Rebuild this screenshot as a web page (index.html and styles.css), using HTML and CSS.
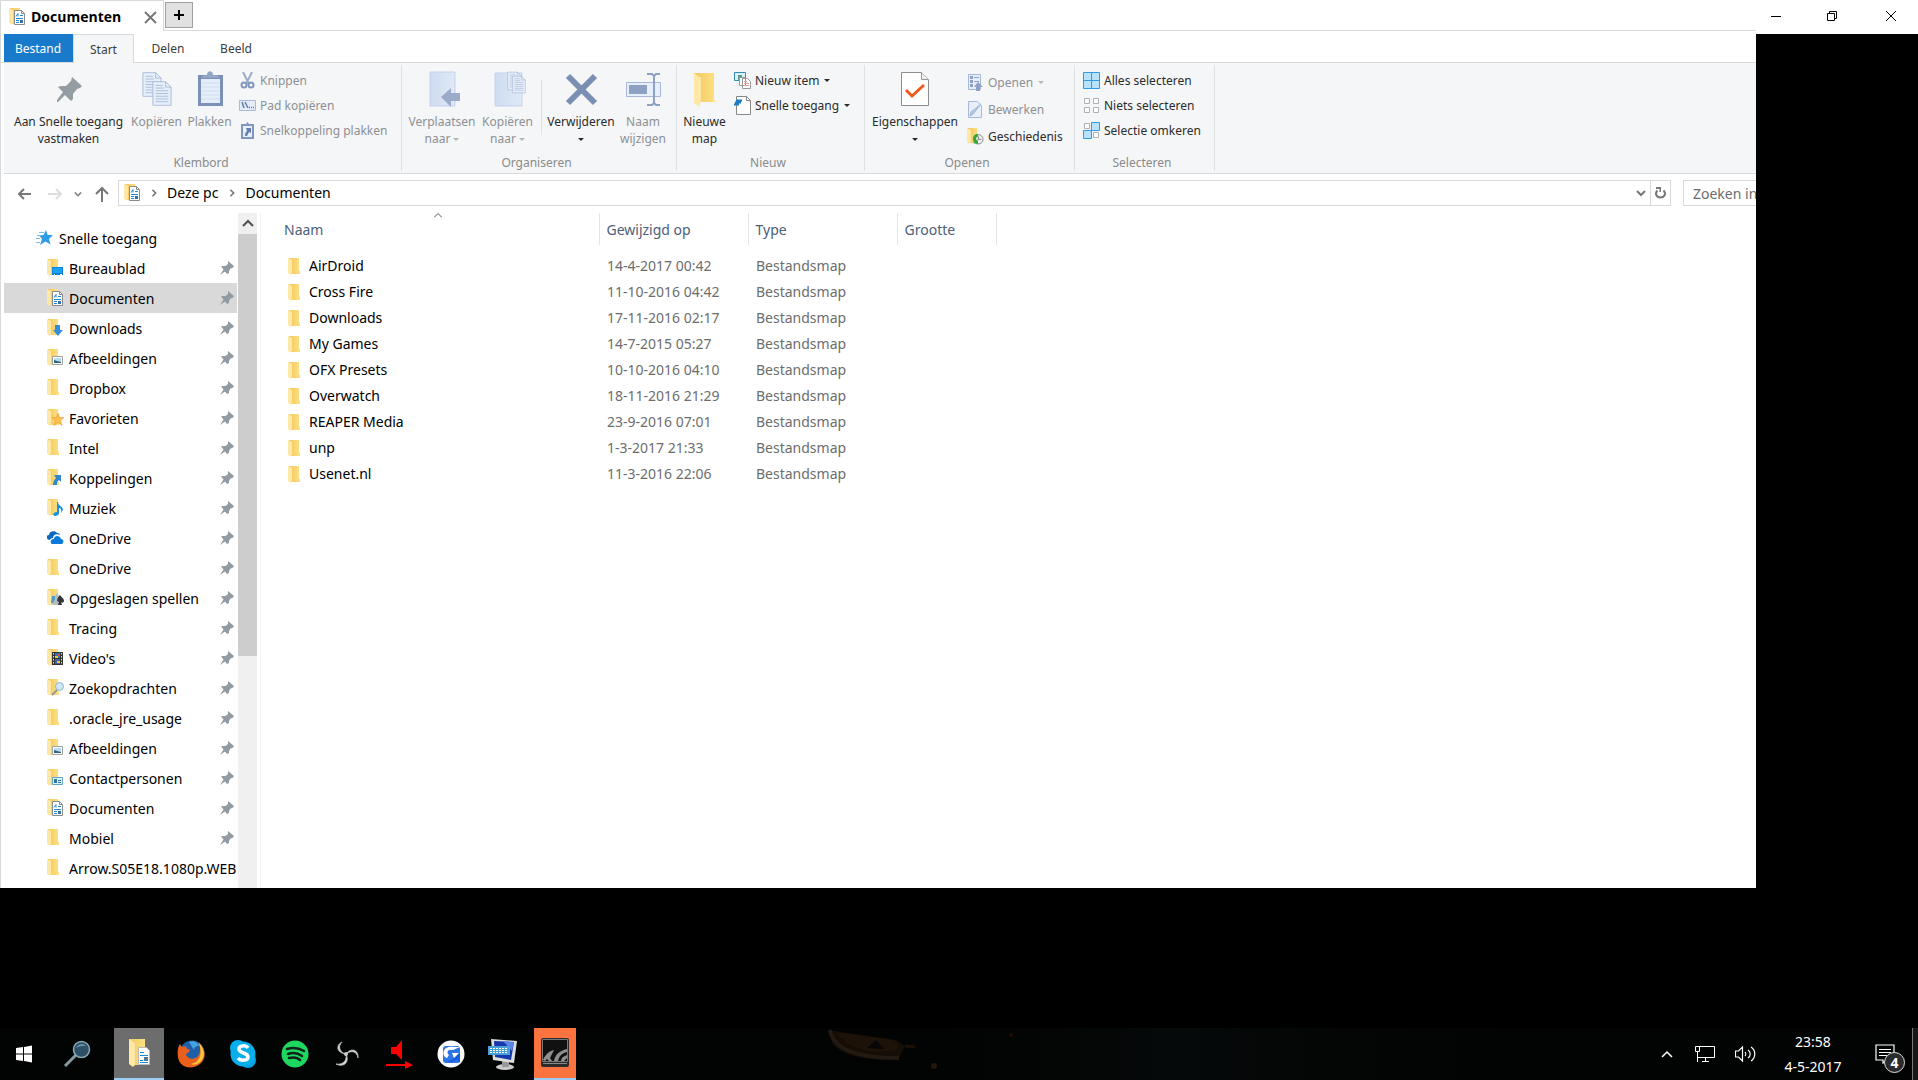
FILE: index.html
```html
<!DOCTYPE html>
<html lang="nl">
<head>
<meta charset="utf-8">
<title>Documenten</title>
<link rel="stylesheet" href="styles.css">
</head>
<body>
<svg class="defs" aria-hidden="true">
  <linearGradient id="gold"><stop offset="0" stop-color="#f0c95f"/><stop offset="1" stop-color="#ffe083"/></linearGradient>
  <linearGradient id="pale"><stop offset="0" stop-color="#cfdcf0"/><stop offset="1" stop-color="#dfe9f7"/></linearGradient>
  <symbol id="folder" viewBox="0 0 18 18"><path d="M1 0h10v12l1 1v3H2z" fill="url(#gold)"/><path d="M0 0l4 2v13l-1 1v1L0 15z" fill="#ffe8a6"/></symbol>
  <symbol id="doc" viewBox="0 0 18 18"><path d="M5.500 2.500h7l3 3v11h-10z" fill="#fff" stroke="#8b8b8b"/><path d="M12.500 2.500v3h3" fill="none" stroke="#8b8b8b"/><path d="M7 8.500l2-3v3M11 7.500h3M7 10.500h7M7 12.500h3M7 14.500h3" stroke="#1c8bdc" fill="none"/><path d="M11 12h3v3h-3z" fill="#3b6ea5"/></symbol>
  <symbol id="desk" viewBox="0 0 18 18"><path d="M5 8h11v8H5z" fill="#0a84dc"/><path d="M6 9h9v5H6z" fill="#18a2f4"/><path d="M7 15.500h1M13 15.500h2" stroke="#fff"/></symbol>
  <symbol id="down" viewBox="0 0 18 18"><path d="M8 6h5v5h3l-5 6-5-6h2z" fill="#358bdc"/></symbol>
  <symbol id="pic" viewBox="0 0 18 18"><path d="M5.500 7.500h10v8h-10z" fill="#fff" stroke="#a1a1a1"/><path d="M7 9h7v5H7z" fill="#b8dcf4"/><path d="M7 11l3 1 4 1v1H7z" fill="#2f6473"/></symbol>
  <symbol id="fav" viewBox="0 0 18 18"><path d="M11 4l1.500 4.500H17l-3.500 3 1.500 5-4-3-4 3 1.300-5L5 8.500h4.500z" fill="#ffbe4d" stroke="#e89a32" stroke-width=".6"/></symbol>
  <symbol id="link" viewBox="0 0 18 18"><path d="M7 6h7v7l-2-2c-2 1-2 3-2 5H6c0-3 1-5 3-7z" fill="#3187cf"/></symbol>
  <symbol id="music" viewBox="0 0 18 18"><path d="M10 3h1c0 4 5 4 5 8l-2 3c1-4-1-5-2-5v5c0 2-2 3-4 3-3-1-2-4 2-4z" fill="#1593e6"/></symbol>
  <symbol id="cloud" viewBox="0 0 18 18"><path d="M3 11c-5-1-4-5-1-5 0-4 6-5 8-2 2 0 3 1 3 2-4-2-7 0-7 3-2 0-3 1-3 2z" fill="#0a67bf"/><path d="M4 14c-1-3 1-4 3-4 0-4 6-4 7 0 3 0 3 4 1 5H6c-1 0-2 0-2-1z" fill="#0a7bdc"/></symbol>
  <symbol id="games" viewBox="0 0 18 18"><path d="M5 7h3v7H4z" fill="#509cc8"/><path d="M8 7l2-3 2 3-1 2 2 7H5l3-6z" fill="#b3bec3"/><path d="M13 6c1 2 4 3 4 6 0 2-3 2-3 1l1 3h-4l1-3c-2 0-3-3 1-7z" fill="#34363b"/></symbol>
  <symbol id="video" viewBox="0 0 18 18"><path d="M5 3h11v13H5z" fill="#333"/><path d="M8 4h5v5H8z" fill="#2c72c4"/><path d="M8 10h5v5H8z" fill="#3c62a8"/><path d="M8 7h3v2H8zM10 12h3v2h-3z" fill="#f5c62c"/><path d="M11 5h2v2h-2z" fill="#d9512e"/><path d="M6.500 4v12M14.500 4v12" stroke="#ddd" stroke-dasharray="1.500"/></symbol>
  <symbol id="lens" viewBox="0 0 18 18"><path d="M10 11l-5 5" stroke="#9a9a9a" stroke-width="2"/><circle cx="12.500" cy="7.500" r="4" fill="#cbe9fb" stroke="#94b4c6"/></symbol>
  <symbol id="contact" viewBox="0 0 18 18"><path d="M5.500 8.500h10v7h-10z" fill="#d9f0fb" stroke="#66a5c6"/><path d="M7 10h3v4H7z" fill="#317695"/><path d="M11 11.500h3M11 13.500h3" stroke="#317695"/></symbol>
  <symbol id="star" viewBox="0 0 18 18"><path d="M10 1l1.600 5L17 6l-4 4 1.500 5.500-5-3L4 16l2-6-3-3.500 4.500-.5z" fill="#2e9ce8"/><path d="M3 3.500h5M1 6.500h3M0 9.500h4M0 13.500h4" stroke="#7bbce8"/></symbol>
  <symbol id="pin" viewBox="0 0 14 14"><path d="M8 0l6 5-1.500 2-2 .5L9 10v2L7 13 5 10.500 0 14l3.500-5.500L1 5.500l1.500-.5h3L8 3z" fill="#919ba1"/></symbol>
  <symbol id="chev" viewBox="0 0 10 10"><path d="M1 3l4 4 4-4" fill="none" stroke="currentColor" stroke-width="2"/></symbol>
  <symbol id="tri" viewBox="0 0 6 4"><path d="M0 0h6L3 3z" fill="currentColor"/></symbol>
  <symbol id="page" viewBox="0 0 22 28"><path d="M1 1h14l6 6v20H1z" fill="#e6effa" stroke="#a9b9d7"/><path d="M15 1v6h6M4 5h8M4 8h9M4 11h14M4 14h14M4 17h14M4 20h14M4 23h14" fill="none" stroke="#a9b9d7"/></symbol>
</svg>

<main class="desktop">
  <section class="explorer">
    <div class="titlebar">
      <div class="wintab">
        <svg width="18" height="18"><use href="#folder"/><use href="#doc"/></svg>
        <strong>Documenten</strong>
        <button class="close" aria-label="Tabblad sluiten"><svg width="13" height="13" viewBox="0 0 13 13"><path d="M1 1l11 11M12 1L1 12" stroke="#777" stroke-width="2"/></svg></button>
      </div>
      <div class="title-rest"><button class="newtab" aria-label="Nieuw tabblad"><svg width="10" height="10" viewBox="0 0 10 10"><path d="M5 0v10M0 5h10" stroke="#000" stroke-width="2"/></svg></button></div>
    </div>
    <nav class="tabs">
      <button class="file">Bestand</button><button class="active">Start</button><button>Delen</button><button>Beeld</button>
    </nav>

    <div class="ribbon">
      <section class="group clip">
        <div class="tools">
          <button class="big w-pin"><svg width="36" height="36" viewBox="0 0 36 36"><path d="M21 6l10 9-2 2-3 1-4 5v5l-2 2-6-6-7 7H6v-2l6-8-5-5 3-1h5l5-5z" fill="#939da2"/></svg><span>Aan Snelle toegang<br>vastmaken</span></button>
          <button class="big w-m" disabled><svg width="36" height="36" viewBox="0 0 36 36"><use href="#page" x="3" y="0" width="20" height="27"/><use href="#page" x="13" y="9" width="20" height="27"/></svg><span>Kopiëren</span></button>
          <button class="big w-s" disabled><svg width="36" height="36" viewBox="0 0 36 36"><path d="M6 4h25v31H6z" fill="#7b90b7"/><path d="M9 8h19v24H9z" fill="#e4eefa"/><path d="M9 12h19M9 16h19M9 20h19M9 24h19M9 28h19" stroke="#cfdcf0"/><path d="M9 7l3-3h3c0-5 6-5 6 0h4l3 3z" fill="#94a5c6"/></svg><span>Plakken</span></button>
          <div class="list">
            <button disabled><svg width="17" height="17" viewBox="0 0 17 17"><path d="M4 0l6 12M13 0L7 12" stroke="#9aacca" stroke-width="2"/><circle cx="5" cy="13" r="2.500" fill="none" stroke="#8297bd" stroke-width="2"/><circle cx="12" cy="13" r="2.500" fill="none" stroke="#8297bd" stroke-width="2"/></svg>Knippen</button>
            <button disabled><svg width="17" height="17" viewBox="0 0 17 17"><path d="M.5 3.500h16v10H.5z" fill="#e3ecf8" stroke="#a9b9d7"/><path d="M3 5l2 6M6 5l3 6M10 10.500h1M12 10.500h1M14 10.500h1" stroke="#667fae" stroke-width="1.500"/></svg>Pad kopiëren</button>
            <button disabled><svg width="17" height="17" viewBox="0 0 17 17"><path d="M2 2h13v15H2z" fill="#8297bd"/><path d="M4 4h9v11H4z" fill="#e6effa"/><path d="M5 3l2-1 1.500-2L10 2l2 1v1H5z" fill="#8297bd"/><path d="M7 6h5v5l-2-1-2 4H6c0-3 1-4 2-5z" fill="#667fae"/></svg>Snelkoppeling plakken</button>
          </div>
        </div>
        <h2>Klembord</h2>
      </section>
      <section class="group org">
        <div class="tools">
          <button class="big w-l" disabled><svg width="36" height="36" viewBox="0 0 36 36"><path d="M6 1h25v34H6z" fill="url(#pale)" stroke="#c3d2ea"/><path d="M17 26l10-9v5h10v8H27v6z" fill="#9aabca"/></svg><span>Verplaatsen<br>naar <svg class="tri"><use href="#tri"/></svg></span></button>
          <button class="big w-m" disabled><svg width="36" height="36" viewBox="0 0 36 36"><path d="M5 2h27v33H5z" fill="url(#pale)" stroke="#c3d2ea"/><use href="#page" x="17" y="0" width="15" height="20"/><use href="#page" x="22" y="4" width="14" height="19"/></svg><span>Kopiëren<br>naar <svg class="tri"><use href="#tri"/></svg></span></button>
          <i class="sep"></i>
          <button class="big w-v"><svg width="36" height="36" viewBox="0 0 36 36"><path d="M5 5l27 27M32 5L5 32" stroke="#7b8fb3" stroke-width="6"/></svg><span>Verwijderen<br><svg class="tri"><use href="#tri"/></svg></span></button>
          <button class="big w-n" disabled><svg width="36" height="36" viewBox="0 0 36 36"><path d="M1.500 11.500h34v14h-34z" fill="#e6effa" stroke="#a5b8da"/><path d="M4 14h18v9H4z" fill="#8ea0c3"/><path d="M22 3h5l2 2 2-2h4M29 5v28M22 34h5l2-2 2 2h4" fill="none" stroke="#8ea0c3" stroke-width="2"/></svg><span>Naam<br>wijzigen</span></button>
        </div>
        <h2>Organiseren</h2>
      </section>
      <section class="group new">
        <div class="tools">
          <button class="big w-s"><svg width="36" height="36" viewBox="0 0 36 36"><path d="M7 2h20v27l2 2v0H10z" fill="url(#gold)"/><path d="M7 2l7 5v24l-1 2v3l-6-4z" fill="#ffe8a6"/></svg><span>Nieuwe<br>map</span></button>
          <div class="list">
            <button><svg width="17" height="17" viewBox="0 0 17 17"><path d="M.5.500h11v8H.5z" fill="#d9f0fb" stroke="#338db7"/><path d="M4 3h4v5H4z" fill="#549c88"/><path d="M5.500 5.500h6v8h-6zM8.500 6.500h5l3 3v7h-8z" fill="#fff" stroke="#999"/><path d="M10 9.500h3M10 11.500h5M10 13.500h5" stroke="#d8a4a0"/></svg>Nieuw item <svg class="tri"><use href="#tri"/></svg></button>
            <button><svg width="17" height="19" viewBox="0 0 17 19"><path d="M2.500.500h10l4 4v14h-14z" fill="#fff" stroke="#888"/><path d="M12.500.500v4h4" fill="none" stroke="#888"/><path d="M2 4.500h6M1 6.500h6M0 8.500h5" stroke="#1e7cc2" stroke-width="2"/></svg>Snelle toegang <svg class="tri"><use href="#tri"/></svg></button>
          </div>
        </div>
        <h2>Nieuw</h2>
      </section>
      <section class="group open">
        <div class="tools">
          <button class="big w-e"><svg width="36" height="36" viewBox="0 0 36 36"><path d="M4.500 1.500h20l7 7v26h-27z" fill="#fff" stroke="#8d8d8d"/><path d="M24.500 1.500v7h7" fill="#eee" stroke="#999"/><path d="M9 19l6 6 12-11" fill="none" stroke="#f05a1a" stroke-width="3"/></svg><span>Eigenschappen<br><svg class="tri"><use href="#tri"/></svg></span></button>
          <div class="list loose">
            <button disabled><svg width="17" height="17" viewBox="0 0 17 17"><path d="M1.500.500h12v15h-12z" fill="#e6effa" stroke="#a5b8da"/><path d="M3 2h3v3H3zM3 6h3v3H3zM3 10h3v3H3zM7 3h5v1H7zM7 7h5v1H7z" fill="#8ea0c3"/><path d="M11 8l5 5h-3v4H9v-4H7z" fill="#8ea0c3"/></svg>Openen <svg class="tri"><use href="#tri"/></svg></button>
            <button disabled><svg width="17" height="17" viewBox="0 0 17 17"><path d="M1.500.500h9l4 4v12h-13z" fill="#e6effa" stroke="#a5b8da"/><path d="M14 3L6 13l-3 2 1-4z" fill="#b9cae5" stroke="#a0b3d3"/></svg>Bewerken</button>
            <button><svg width="17" height="17" viewBox="0 0 18 18"><use href="#folder" width="18" height="18"/><circle cx="12" cy="12" r="5" fill="#eee" stroke="#888"/><path d="M12 9v3h3" fill="none" stroke="#777"/><path d="M11 6c-5 1-6 6-3 9l-2 1 6 1-1-5-1 1c-1-2 0-4 2-4z" fill="#33a63a"/></svg>Geschiedenis</button>
          </div>
        </div>
        <h2>Openen</h2>
      </section>
      <section class="group select">
        <div class="tools">
          <div class="list">
            <button><svg width="17" height="17" viewBox="0 0 17 17"><path d="M.5.500h16v16H.5zM8.500 1v15M1 8.500h15" fill="#b9e2ff" stroke="#2f9be8"/></svg>Alles selecteren</button>
            <button><svg width="17" height="17" viewBox="0 0 17 17"><path d="M1.500 1.500h5v5h-5zM10.500 1.500h5v5h-5zM1.500 10.500h5v5h-5zM10.500 10.500h5v5h-5z" fill="#fff" stroke="#b0b0b0"/></svg>Niets selecteren</button>
            <button><svg width="17" height="17" viewBox="0 0 17 17"><path d="M1.500 1.500h5v5h-5zM10.500 10.500h5v5h-5z" fill="#fff" stroke="#b0b0b0"/><path d="M8.500.500h8v8h-8zM.5 8.500h8v8h-8z" fill="#b9e2ff" stroke="#2f9be8"/></svg>Selectie omkeren</button>
          </div>
        </div>
        <h2>Selecteren</h2>
      </section>
    </div>

    <div class="address">
      <div class="history">
        <button aria-label="Vorige"><svg width="14" height="12" viewBox="0 0 14 12"><path d="M13 6H2M6 1L1 6l5 5" fill="none" stroke="#777" stroke-width="2"/></svg></button>
        <button aria-label="Volgende"><svg width="14" height="12" viewBox="0 0 14 12"><path d="M0 6h12M8 1l5 5-5 5" fill="none" stroke="#dedede" stroke-width="2"/></svg></button>
        <button aria-label="Recente locaties" class="small"><svg width="8" height="8" color="#888"><use href="#chev"/></svg></button>
        <button aria-label="Omhoog"><svg width="14" height="16" viewBox="0 0 14 16"><path d="M7 16V2M1 8l6-6 6 6" fill="none" stroke="#777" stroke-width="2"/></svg></button>
      </div>
      <div class="path">
        <svg width="18" height="18"><use href="#folder"/><use href="#doc"/></svg>
        <svg class="crumb" width="8" height="8"><use href="#chev"/></svg>
        <a href="#">Deze pc</a>
        <svg class="crumb" width="8" height="8"><use href="#chev"/></svg>
        <a href="#">Documenten</a>
        <button class="drop" aria-label="Vorige locaties"><svg width="10" height="10"><use href="#chev"/></svg></button>
      </div>
      <button class="refresh" aria-label="Vernieuwen"><svg width="11" height="12" viewBox="0 0 11 12"><path d="M2.500 3.500c-3 3-1 7 3 7s6-4 3-7" fill="none" stroke="#777" stroke-width="2"/><path d="M1 0h5v5H4.500V2H1z" fill="#777"/></svg></button>
      <input class="search" type="text" aria-label="Zoeken" placeholder="Zoeken in Documenten">
    </div>

    <div class="body">
      <aside class="side">
        <a class="root" href="#"><svg width="18" height="18"><use href="#star"/></svg><span>Snelle toegang</span></a>
        <a href="#"><svg><use href="#folder"/><use href="#desk"/></svg><span>Bureaublad</span><svg class="pin"><use href="#pin"/></svg></a>
        <a class="current" href="#"><svg><use href="#folder"/><use href="#doc"/></svg><span>Documenten</span><svg class="pin"><use href="#pin"/></svg></a>
        <a href="#"><svg><use href="#folder"/><use href="#down"/></svg><span>Downloads</span><svg class="pin"><use href="#pin"/></svg></a>
        <a href="#"><svg><use href="#folder"/><use href="#pic"/></svg><span>Afbeeldingen</span><svg class="pin"><use href="#pin"/></svg></a>
        <a href="#"><svg><use href="#folder"/></svg><span>Dropbox</span><svg class="pin"><use href="#pin"/></svg></a>
        <a href="#"><svg><use href="#folder"/><use href="#fav"/></svg><span>Favorieten</span><svg class="pin"><use href="#pin"/></svg></a>
        <a href="#"><svg><use href="#folder"/></svg><span>Intel</span><svg class="pin"><use href="#pin"/></svg></a>
        <a href="#"><svg><use href="#folder"/><use href="#link"/></svg><span>Koppelingen</span><svg class="pin"><use href="#pin"/></svg></a>
        <a href="#"><svg><use href="#folder"/><use href="#music"/></svg><span>Muziek</span><svg class="pin"><use href="#pin"/></svg></a>
        <a href="#"><svg><use href="#cloud"/></svg><span>OneDrive</span><svg class="pin"><use href="#pin"/></svg></a>
        <a href="#"><svg><use href="#folder"/></svg><span>OneDrive</span><svg class="pin"><use href="#pin"/></svg></a>
        <a href="#"><svg><use href="#folder"/><use href="#games"/></svg><span>Opgeslagen spellen</span><svg class="pin"><use href="#pin"/></svg></a>
        <a href="#"><svg><use href="#folder"/></svg><span>Tracing</span><svg class="pin"><use href="#pin"/></svg></a>
        <a href="#"><svg><use href="#folder"/><use href="#video"/></svg><span>Video's</span><svg class="pin"><use href="#pin"/></svg></a>
        <a href="#"><svg><use href="#folder"/><use href="#lens"/></svg><span>Zoekopdrachten</span><svg class="pin"><use href="#pin"/></svg></a>
        <a href="#"><svg><use href="#folder"/></svg><span>.oracle_jre_usage</span><svg class="pin"><use href="#pin"/></svg></a>
        <a href="#"><svg><use href="#folder"/><use href="#pic"/></svg><span>Afbeeldingen</span><svg class="pin"><use href="#pin"/></svg></a>
        <a href="#"><svg><use href="#folder"/><use href="#contact"/></svg><span>Contactpersonen</span><svg class="pin"><use href="#pin"/></svg></a>
        <a href="#"><svg><use href="#folder"/><use href="#doc"/></svg><span>Documenten</span><svg class="pin"><use href="#pin"/></svg></a>
        <a href="#"><svg><use href="#folder"/></svg><span>Mobiel</span><svg class="pin"><use href="#pin"/></svg></a>
        <a href="#"><svg><use href="#folder"/></svg><span>Arrow.S05E18.1080p.WEB</span></a>
      </aside>
      <div class="scroll"><button aria-label="Omhoog schuiven"><svg width="12" height="12" viewBox="0 0 12 12"><path d="M1 8l5-5 5 5" fill="none" stroke="#505050" stroke-width="2"/></svg></button><div class="thumb"></div></div>
      <div class="files">
        <table>
          <colgroup><col class="c-name"><col class="c-date"><col class="c-date"><col class="c-size"></colgroup>
          <thead><tr><th>Naam<svg class="sort" width="8" height="5" viewBox="0 0 8 5"><path d="M0 4.500l4-4 4 4" fill="none" stroke="#555"/></svg></th><th>Gewijzigd op</th><th>Type</th><th>Grootte</th></tr></thead>
          <tbody>
            <tr><td><svg><use href="#folder"/></svg>AirDroid</td><td>14-4-2017 00:42</td><td>Bestandsmap</td><td></td></tr>
            <tr><td><svg><use href="#folder"/></svg>Cross Fire</td><td>11-10-2016 04:42</td><td>Bestandsmap</td><td></td></tr>
            <tr><td><svg><use href="#folder"/></svg>Downloads</td><td>17-11-2016 02:17</td><td>Bestandsmap</td><td></td></tr>
            <tr><td><svg><use href="#folder"/></svg>My Games</td><td>14-7-2015 05:27</td><td>Bestandsmap</td><td></td></tr>
            <tr><td><svg><use href="#folder"/></svg>OFX Presets</td><td>10-10-2016 04:10</td><td>Bestandsmap</td><td></td></tr>
            <tr><td><svg><use href="#folder"/></svg>Overwatch</td><td>18-11-2016 21:29</td><td>Bestandsmap</td><td></td></tr>
            <tr><td><svg><use href="#folder"/></svg>REAPER Media</td><td>23-9-2016 07:01</td><td>Bestandsmap</td><td></td></tr>
            <tr><td><svg><use href="#folder"/></svg>unp</td><td>1-3-2017 21:33</td><td>Bestandsmap</td><td></td></tr>
            <tr><td><svg><use href="#folder"/></svg>Usenet.nl</td><td>11-3-2016 22:06</td><td>Bestandsmap</td><td></td></tr>
          </tbody>
        </table>
      </div>
    </div>
  </section>
  <div class="controls">
    <button aria-label="Minimaliseren"><svg width="10" height="10" viewBox="0 0 10 10"><path d="M0 5.500h10" stroke="#000"/></svg></button>
    <button aria-label="Verkleinen"><svg width="10" height="10" viewBox="0 0 10 10"><path d="M.5 2.500h7v7h-7zM2.500 2.500v-2h7v7h-2" fill="none" stroke="#000"/></svg></button>
    <button aria-label="Sluiten"><svg width="10" height="10" viewBox="0 0 10 10"><path d="M0 0l10 10M10 0L0 10" stroke="#000"/></svg></button>
  </div>
</main>

<footer class="taskbar">
  <button class="t-start" aria-label="Start"><svg width="16" height="18" viewBox="0 0 16 18"><path d="M0 3l7-1v6.500H0zM8 2l8-1.500v8H8zM0 9.500h7V16l-7-1zM8 9.500h8v8L8 16z" fill="#fff"/></svg></button>
  <button class="t-find" aria-label="Zoeken"><svg width="28" height="28" viewBox="0 0 28 28"><path d="M13 15L2 26" stroke="#8999a2" stroke-width="3"/><circle cx="18.500" cy="9.500" r="8" fill="#2e5066" stroke="#8aa8b8" stroke-width="1.500"/><path d="M13 8c2-5 8-5 10-2-4 0-6 0-10 2z" fill="#6c8fa4"/></svg></button>
  <button class="t-folder on" aria-label="Verkenner"><svg width="24" height="30" viewBox="0 0 24 30"><path d="M2 1h16v26H5z" fill="url(#gold)"/><path d="M2 1l6 4v22l-2 2-4-3z" fill="#ffe8a6"/><path d="M11.500 9.500h8l3 3v14h-11z" fill="#fff" stroke="#bbb"/><path d="M13 14.500h4M13 17.500h8M13 22.500h3M13 24.500h8" stroke="#1c8bdc"/><path d="M17 19h4v4h-4z" fill="#4a7a9b"/></svg></button>
  <button class="t-first" aria-label="Firefox"><svg width="28" height="28" viewBox="0 0 28 28"><circle cx="15" cy="13" r="12.500" fill="#1f5fa8"/><path d="M12 2c6-2 9 1 10 4-4 0-5 2-5 4z" fill="#42a4dc"/><path d="M21 2c8 6 9 16 2 22C14 31 2 27 1 17 0 11 1 7 3 4l2 3 4-1c0 2 1 3 4 4-1 3-4 3-4 5 2 4 7 5 11 2 4-4 4-9 1-15z" fill="#e8601c"/><path d="M22 3c6 6 7 15 0 20-3 2-6 2-8 1 8-2 12-8 8-21z" fill="#fdc63a"/></svg></button>
  <button aria-label="Skype"><svg width="28" height="30" viewBox="0 0 28 30"><circle cx="9" cy="9" r="8" fill="#00aff0"/><circle cx="19" cy="21" r="8" fill="#00a4e4"/><circle cx="14" cy="15" r="12.500" fill="#0aaeea"/><path d="M19 9c-2-3-9-3-9 1 0 5 9 3 9 8 0 4-8 4-10 1" fill="none" stroke="#fff" stroke-width="3.500"/></svg></button>
  <button aria-label="Spotify"><svg width="28" height="28" viewBox="0 0 28 28"><circle cx="14" cy="14" r="13.500" fill="#1ed760"/><path d="M6 9c6-2 12-1 17 2M7 14c5-2 10-1 14 2M8 18c4-1 8-1 11 2" fill="none" stroke="#10231a" stroke-width="2.500" stroke-linecap="round"/></svg></button>
  <button aria-label="OBS"><svg width="26" height="28" viewBox="0 0 26 28"><path d="M8 2C2 5 2 12 11 14 5 11 4 6 8 2zM24 18c1-8-7-11-12-4 5-4 11-3 12 4zM2 24c8 4 14-2 10-10 1 7-3 11-10 10z" fill="#ddd" stroke="#bbb" stroke-width=".8"/><circle cx="12" cy="14" r="2" fill="#ccc"/></svg></button>
  <button aria-label="Audio"><svg width="28" height="30" viewBox="0 0 28 30"><path d="M6 8h5l6-7v20l-6-6H6zM1 25h19v-3l8 4-8 4v-3H1z" fill="red"/></svg></button>
  <button aria-label="G"><svg width="28" height="28" viewBox="0 0 28 28"><circle cx="14" cy="14" r="13.500" fill="#fff"/><rect x="6" y="6" width="17" height="17" rx="3" fill="#2e75e6"/><path d="M23 7l-7 3h-4c-2 1-2 4 0 5l-2 3c-4-1-5-7-1-10 3-2 9-1 14-1z" fill="#fff"/><path d="M15 13h8v10l-3-4c-3 3-7 4-10 2 4 0 7-2 8-4z" fill="#165ce0"/><path d="M15 13h7l-5 5z" fill="#fff"/></svg></button>
  <button aria-label="Schermtoetsenbord"><svg width="30" height="32" viewBox="0 0 30 32"><ellipse cx="17" cy="29" rx="9" ry="3" fill="#ccc"/><path d="M14 22h7v7h-7z" fill="#999"/><path d="M3 1l26 2-3 22-21-3z" fill="#ddd"/><path d="M6 3l20 1-3 18-16-3z" fill="#1737ac"/><path d="M15 3l11 1-2 9z" fill="#5b84e7"/><path d="M0 8h22v9H0z" fill="#49a0d9"/><path d="M2 10.500h18M2 12.500h18M2 14.500h18" stroke="#fff" stroke-dasharray="2 1"/></svg></button>
  <button class="t-nv on" aria-label="NVIDIA"><svg width="28" height="30" viewBox="0 0 28 30"><rect width="28" height="29" rx="2" fill="#2b2b2b"/><path d="M1.500 1.500h25v22h-25z" fill="#111" stroke="#777"/><path d="M2 25.500h24" stroke="#888"/><path d="M2 22c2-5 6-9 11-10l-4 8 2 3H8l-2-2-2 2zM13 23c1-6 5-10 13-12v3c-5 1-8 4-9 9zM20 23c0-3 3-5 6-6v3l-3 3z" fill="#8e8e8e"/></svg></button>
  <div class="wallpaper"><svg width="200" height="50" viewBox="0 0 200 50"><path d="M8 2l12 2 55 8 9 6-6 12c-26 4-50 0-66-13z" fill="#150e07"/><path d="M9 2c3 19 27 28 69 28" fill="none" stroke="#231a12" stroke-width="4"/><path d="M14 4l58 8 6 5-4 6c-26 3-46-2-60-19z" fill="#1c1208"/><path d="M46 20l9-8 8 9z" fill="#070707"/><path d="M84 18l10 1" stroke="#1c0f08" stroke-width="3"/><circle cx="113" cy="38" r="3" fill="#261608"/><circle cx="190" cy="7" r="2" fill="#200b04"/></svg></div>
  <div class="tray">
    <button aria-label="Verborgen pictogrammen"><svg width="12" height="8" viewBox="0 0 12 8"><path d="M1 7l5-5 5 5" fill="none" stroke="#fff" stroke-width="1.500"/></svg></button>
    <button aria-label="Netwerk"><svg width="20" height="18" viewBox="0 0 20 18"><path d="M4 1.500h15.500v11H2.500V7M.5 1.500h4v5h-4zM2.500 12v5M7 16.500h7M10.500 13v3" fill="none" stroke="#fff"/></svg></button>
    <button aria-label="Volume"><svg width="21" height="18" viewBox="0 0 21 18"><path d="M.5 6h3l4-4v14l-4-4h-3zM10 7c1 1 1 3 0 4M13 5c3 2 3 6 0 8M16 2c5 3 5 11 0 14" fill="none" stroke="#fff" stroke-width="1.200"/></svg></button>
    <div class="clock"><time>23:58</time><time>4-5-2017</time></div>
    <button class="note" aria-label="Meldingen"><svg width="20" height="20" viewBox="0 0 20 20"><path d="M1 1h18v15h-7l-4 3v-3H1zM4 5.500h12M4 8.500h12M4 11.500h8" fill="none" stroke="#fff" stroke-width="1.200"/></svg><b>4</b></button>
    <div class="peek"></div>
  </div>
</footer>
</body>
</html>
```
FILE: styles.css
```css
* { box-sizing: border-box; }
body { margin: 0; min-height: 100vh; display: flex; flex-direction: column; justify-content: space-between; background: #000; color: #000; font: 14px/20px "Noto Sans", "Open Sans", sans-serif; }
button { border: 0; margin: 0; padding: 0; background: none; font: inherit; color: inherit; display: flex; align-items: center; justify-content: center; }
a { color: inherit; text-decoration: none; }
svg { flex: none; }
.defs { position: absolute; width: 0; height: 0; }

.desktop { display: grid; grid-template-columns: minmax(0, 1fr) 162px; align-items: start; }
.explorer { background: #fff; border-left: 1px solid #d9d9d9; overflow: hidden; }
.controls { height: 34px; background: #fff; display: flex; }
.controls button { flex: 1; height: 32px; }
.controls button:first-child { flex: 0 0 40px; }
.controls button:nth-child(2) { flex: 0 0 72px; }
.controls button:last-child { padding-right: 6px; padding-left: 2px; }

.titlebar { display: flex; height: 31px; }
.wintab { width: 163px; display: flex; align-items: center; padding: 2px 6px 0 8px; border-top: 1px solid #d9d9d9; border-right: 1px solid #d9d9d9; }
.wintab strong { margin-left: 4px; font-size: 14px; font-weight: 700; font-family: "Open Sans", sans-serif; }
.wintab .close { margin-left: auto; }
.title-rest { flex: 1; border-bottom: 1px solid #d9d9d9; padding: 2px 1px; }
.newtab { width: 28px; height: 26px; background: #e1e1e1; border: 1px solid #a0a0a0; }

.tabs { display: flex; height: 32px; padding: 3px 0 0 3px; border-bottom: 1px solid #d9dadb; font-size: 12px; color: #3c3c3c; }
.tabs button { width: 68px; height: 28px; padding-top: 1px; }
.tabs .file { width: 69px; padding-right: 1px; background: #1979ca; color: #fff; }
.tabs .active { width: 61px; height: 29px; background: #f5f6f7; border: 1px solid #d9dadb; border-bottom: 0; }

.ribbon { display: flex; height: 111px; margin-left: 3px; padding: 2px 0; background: #f5f6f7; border-bottom: 1px solid #d9dadb; font-size: 12px; line-height: 17px; color: #2b2b2b; }
.group { display: flex; flex-direction: column; height: 106px; border-right: 1px solid #e0e1e2; padding-left: 3px; }
.group.clip { width: 398px; padding-left: 5px; }
.group.org { width: 275px; }
.group.new { width: 188px; }
.group.open { width: 210px; }
.group.select { width: 140px; }
.group h2 { margin: auto 8px 0 0; font-size: 12px; line-height: 17px; font-weight: 400; text-align: center; color: #8a8a8a; }
.tools { display: flex; }
.ribbon button:disabled { color: #8d9095; }
.big { flex-direction: column; justify-content: flex-start; padding-top: 6px; height: 84px; white-space: nowrap; }
.big span { margin-top: 6px; }
.w-pin { width: 119px; }
.w-m { width: 57px; }
.w-s { width: 49px; }
.w-l { width: 74px; }
.w-v { width: 70px; }
.w-n { width: 54px; }
.w-e { width: 94px; }
.tri { width: 6px; height: 4px; vertical-align: middle; }
button:disabled .tri { color: #b4b6b9; }
.sep { width: 1px; height: 55px; margin: 15px 4px 0 5px; background: #e0e1e2; }
.list { padding: 3px 0 0 5px; }
.list button { height: 25px; gap: 4px; white-space: nowrap; }
.list .tri { margin-left: 1px; }
.list.loose { padding-top: 4px; }
.list.loose button { height: 27px; }
.list.loose button:last-child { height: 26px; }

.address { display: flex; height: 33px; padding: 6px 0 0; }
.history { width: 117px; display: flex; align-items: center; padding-left: 17px; gap: 16px; }
.history .small { margin: 0 -3px 0 -4px; }
.path { flex: 1; display: flex; align-items: center; height: 26px; border: 1px solid #d9d9d9; padding-left: 5px; }
.path a { margin-left: 9px; }
.crumb { margin-left: 8px; color: #777; transform: rotate(-90deg); }
.path a + .crumb { margin-left: 10px; }
.drop { margin-left: auto; width: 19px; height: 24px; color: #777; }
.refresh { width: 20px; height: 26px; border: 1px solid #d9d9d9; border-left: 0; }
.search { width: 73px; height: 26px; margin: 0 0 0 12px; padding: 0 0 0 9px; border: 1px solid #d9d9d9; border-right: 0; font: inherit; background: #fff; }
.search::placeholder { color: #6d6d6d; opacity: 1; }

.body { display: flex; padding-top: 6px; }
.side { width: 237px; padding: 10px 1px 5px 3px; }
.side a { display: flex; align-items: center; height: 30px; padding-left: 43px; white-space: nowrap; overflow: hidden; }
.side .root { padding-left: 32px; }
.side svg { width: 18px; height: 18px; }
.side span { margin-left: 4px; padding-top: 1px; }
.side .root span { margin-left: 5px; }
.side .pin { width: 14px; height: 14px; margin-left: auto; margin-right: 3px; }
.side .current { background: #d9d9d9; }
.scroll { width: 20px; background: #f0f0f0; border-right: 1px solid #fff; }
.scroll button { width: 19px; height: 21px; }
.thumb { height: 64%; max-height: 422px; background: #cdcdcd; }
.files { flex: 1; margin-left: 2px; border-left: 1px solid #f5f5f5; }
table { table-layout: fixed; width: 735px; border-collapse: collapse; }
.c-name { width: 338px; }
.c-date { width: 149px; }
.c-size { width: 99px; }
th { position: relative; height: 32px; padding: 2px 7px 0; border-right: 1px solid #e5e5e5; font-weight: 400; text-align: left; color: #4c607a; }
th:first-child { padding-left: 23px; }
.sort { position: absolute; left: 50%; top: 0; margin-left: 4px; }
tbody::before { content: ""; display: block; height: 8px; }
td { height: 26px; padding: 0 0 0 8px; color: #6d6d6d; white-space: nowrap; }
td:first-child { padding-left: 27px; color: #000; }
td svg { width: 18px; height: 18px; margin-right: 3px; vertical-align: middle; }

.taskbar { display: flex; height: 52px; color: #fff; background: #020303; }
.taskbar > button { width: 52px; height: 52px; }
.taskbar > .t-start { width: 48px; }
.taskbar > .t-find { width: 58px; }
.taskbar > .on { border-bottom: 2px solid #9ccdf3; }
.taskbar > .t-folder { width: 50px; margin-left: 8px; background: #6d6d6d; }
.taskbar > .t-first { margin-left: 1px; }
.taskbar > .t-nv { width: 42px; margin-left: 5px; background: #fb7440; }
.wallpaper { flex: 1; padding-left: 245px; background: linear-gradient(90deg, #020303 35%, #060909 55%, #020303 85%); }
.tray { display: flex; align-items: center; }
.tray > button { margin-right: 20px; }
.tray > button:first-child { margin-right: 22px; }
.clock { width: 74px; display: flex; flex-direction: column; text-align: center; line-height: 25px; }
.tray .note { position: relative; width: 26px; height: 30px; margin: 0 11px 0 25px; justify-content: flex-start; }
.note b { position: absolute; left: 9px; top: 13px; width: 21px; height: 21px; border: 1px solid #ddd; border-radius: 50%; background: #2b2b2b; font-size: 14px; line-height: 19px; }
.peek { width: 6px; height: 52px; background: #181818; border-left: 1px solid #777; }
```
